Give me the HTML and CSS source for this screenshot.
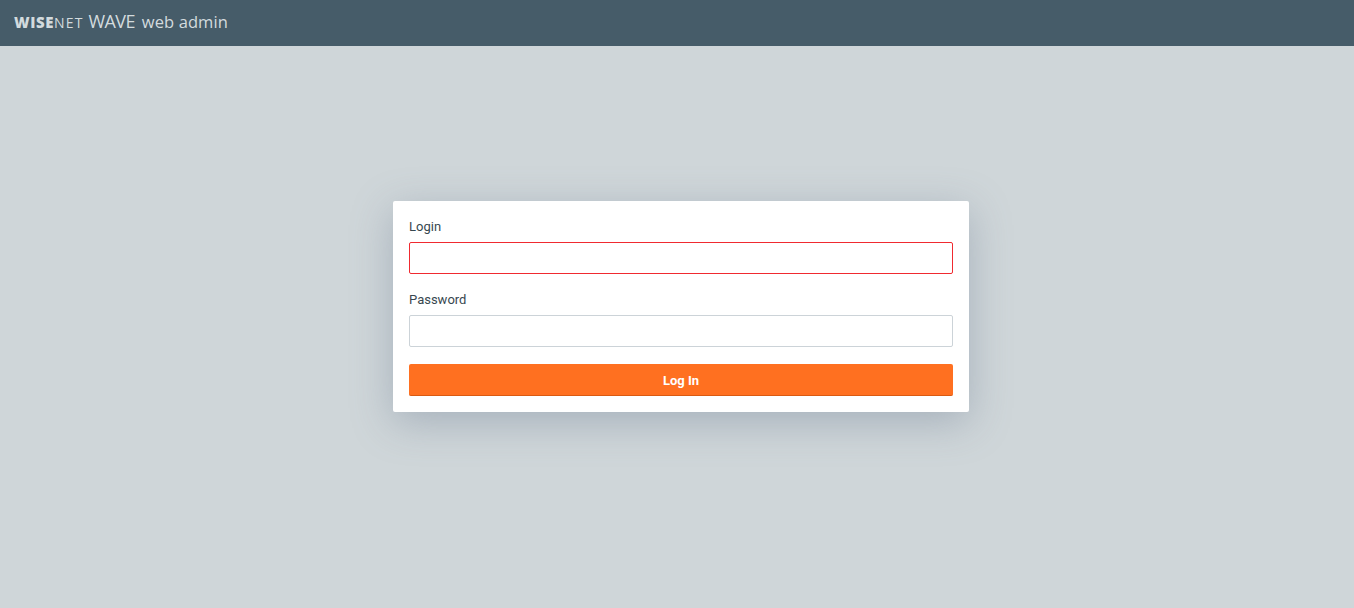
FILE: index.html
```html
<!DOCTYPE html>
<html lang="en">
<head>
<meta charset="utf-8">
<title>WAVE web admin</title>
<link rel="stylesheet" href="styles.css">
</head>
<body>
<header class="topbar">
  <div class="brand">
    <span class="brand-wise">WISE</span><span class="brand-net">NET</span>
    <span class="brand-wave">WAVE</span>
    <span class="brand-admin">web admin</span>
  </div>
</header>
<main class="stage">
  <form class="card">
    <label class="label" for="login">Login</label>
    <input class="field field-error" id="login" type="text">
    <label class="label label-next" for="password">Password</label>
    <input class="field" id="password" type="password">
    <button class="submit" type="button">Log In</button>
  </form>
</main>
</body>
</html>
```
FILE: styles.css
```css
* { box-sizing: border-box; }
html, body { margin: 0; height: 100%; }
body {
  background: #cfd6d9;
  font-family: Roboto, "Liberation Sans", sans-serif;
  overflow: hidden;
}
.topbar {
  height: 46px;
  background: #465c69;
  display: flex;
  align-items: center;
  padding-left: 14px;
}
.brand {
  display: flex;
  align-items: baseline;
  color: #d3dbde;
  font-family: "Open Sans", Roboto, sans-serif;
  white-space: nowrap;
  padding-bottom: 4px;
}
.brand-wise { font-size: 15px; font-weight: 800; letter-spacing: 0.6px; }
.brand-net { font-size: 14px; font-weight: 400; letter-spacing: 1.1px; margin-right: 5px; }
.brand-wave { font-size: 18px; font-weight: 400; letter-spacing: -0.6px; margin-right: 7px; }
.brand-admin { font-size: 16.5px; font-weight: 400; letter-spacing: 0.1px; }
.stage {
  display: flex;
  justify-content: center;
  padding: 155px 0 0 8px;
}
.card {
  width: 576px;
  height: 211px;
  background: #fff;
  border-radius: 2px;
  padding: 16px;
  display: flex;
  flex-direction: column;
  box-shadow: 0 10px 40px rgba(100, 115, 140, 0.38);
}
.label {
  font-size: 13px;
  line-height: 20px;
  height: 20px;
  color: #37474f;
  margin-bottom: 5px;
}
.label-next { margin-top: 16px; }
.field {
  display: block;
  width: 100%;
  height: 32px;
  border: 1px solid #ccd3d8;
  border-radius: 2px;
  background: #fff;
  outline: none;
  flex: none;
}
.field-error { border-color: #f02a30; }
.submit {
  margin-top: 17px;
  height: 32px;
  flex: none;
  border: 0;
  border-bottom: 1px solid #d95a12;
  border-radius: 2px;
  background: #ff7020;
  color: #fff;
  font-family: Roboto, sans-serif;
  font-size: 13px;
  font-weight: 700;
  padding: 1px 0 0;
}
```
